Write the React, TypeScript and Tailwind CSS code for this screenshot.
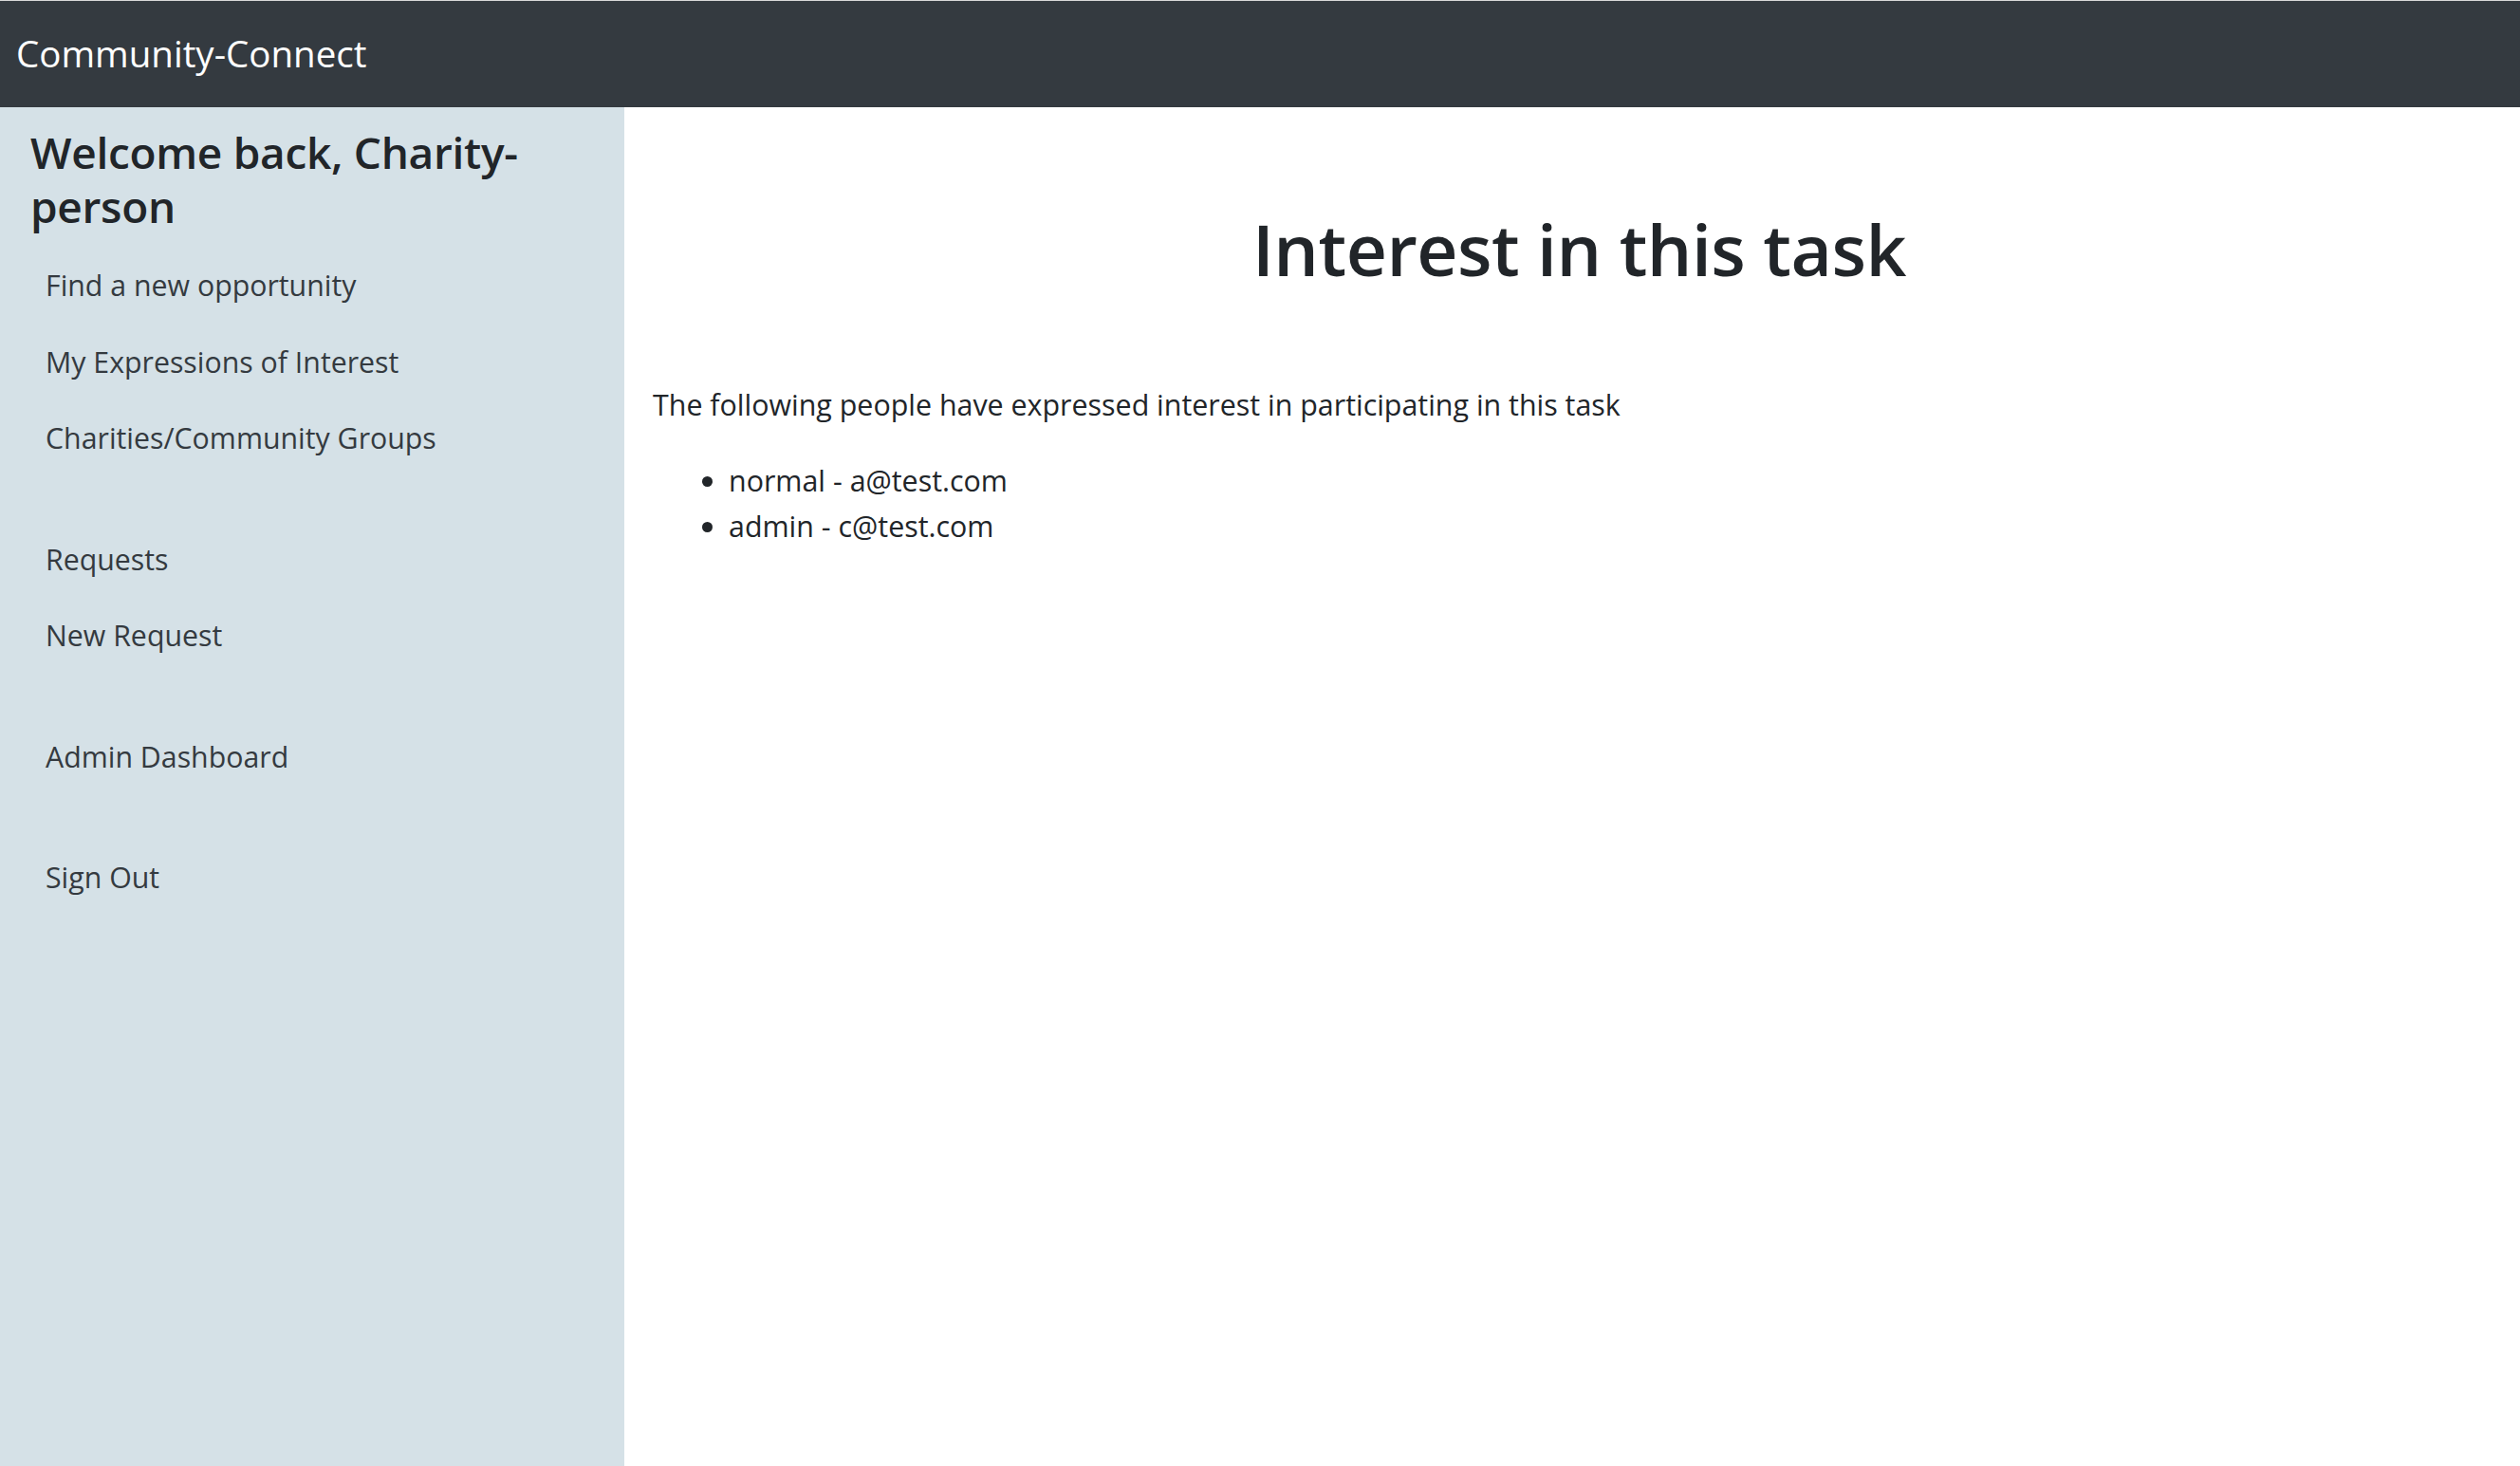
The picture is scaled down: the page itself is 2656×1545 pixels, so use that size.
const font = { fontFamily: '"Open Sans", "Noto Sans", sans-serif' };

const groups: string[][] = [
  ['Find a new opportunity', 'My Expressions of Interest', 'Charities/Community Groups'],
  ['Requests', 'New Request'],
  ['Admin Dashboard'],
  ['Sign Out'],
];

const people = [
  { name: 'normal', email: 'a@test.com' },
  { name: 'admin', email: 'c@test.com' },
];

function Sidebar() {
  return (
    <aside className="w-[658px] shrink-0 bg-[#d5e1e7] px-[32px] pt-[19px]">
      <h4 className="text-[46px] leading-[57px] font-semibold tracking-[-0.3px] text-[#212529] mb-[15px]">
        Welcome back, Charity-person
      </h4>
      <nav className="flex flex-col gap-[47px]">
        {groups.map((group, i) => (
          <ul key={i} className="flex flex-col">
            {group.map((item) => (
              <li key={item}>
                <a href="#" className="block px-[16px] py-[16px] text-[30.3px] leading-[48.5px] text-[#343a40]">
                  {item}
                </a>
              </li>
            ))}
          </ul>
        ))}
      </nav>
    </aside>
  );
}

export default function App() {
  return (
    <div className="min-h-screen flex flex-col bg-white" style={font}>
      <header className="h-[113px] shrink-0 bg-[#343a40] border-t border-[#d8d8d8] flex items-center px-[17px]">
        <span className="text-[38.5px] text-white">Community-Connect</span>
      </header>
      <div className="flex flex-1 min-h-[1432px]">
        <Sidebar />
        <main className="flex-1 px-[30px] pt-[101px] text-[#212529]">
          <h1 className="ml-[15px] text-center text-[75px] leading-[96px] font-semibold tracking-[-0.5px]">
            Interest in this task
          </h1>
          <p className="mt-[93px] text-[30.4px] leading-[48px]">
            The following people have expressed interest in participating in this task
          </p>
          <ul className="mt-[32px] pl-[80px] list-disc text-[30.4px] leading-[48px]">
            {people.map((p) => (
              <li key={p.email}>
                {p.name} - {p.email}
              </li>
            ))}
          </ul>
        </main>
      </div>
    </div>
  );
}
